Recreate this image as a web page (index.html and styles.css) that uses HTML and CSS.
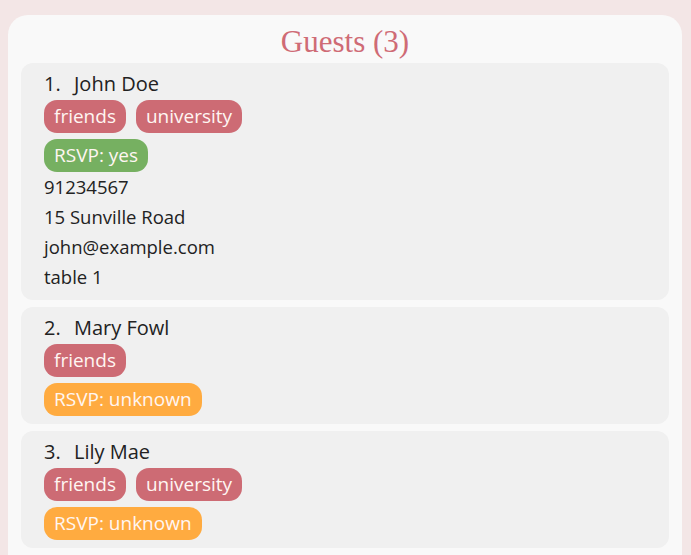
FILE: index.html
```html
<!DOCTYPE html>
<html>
<head>
<meta charset="utf-8">
<link rel="stylesheet" href="styles.css">
</head>
<body>
<div class="panel">
  <h1 class="title">Guests (3)</h1>
  <div class="list">
    <div class="card">
      <div class="name"><span class="num">1.</span>John Doe</div>
      <div class="tags"><span class="tag red">friends</span><span class="tag red">university</span></div>
      <div class="tags rsvp"><span class="tag green">RSVP: yes</span></div>
      <div class="details">
        <div class="line">91234567</div>
        <div class="line">15 Sunville Road</div>
        <div class="line">john@example.com</div>
        <div class="line">table 1</div>
      </div>
    </div>
    <div class="card">
      <div class="name"><span class="num">2.</span>Mary Fowl</div>
      <div class="tags"><span class="tag red">friends</span></div>
      <div class="tags rsvp"><span class="tag orange">RSVP: unknown</span></div>
    </div>
    <div class="card">
      <div class="name"><span class="num">3.</span>Lily Mae</div>
      <div class="tags"><span class="tag red">friends</span><span class="tag red">university</span></div>
      <div class="tags rsvp"><span class="tag orange">RSVP: unknown</span></div>
    </div>
  </div>
</div>
</body>
</html>
```
FILE: styles.css
```css
html, body {
  margin: 0;
  padding: 0;
  background: #f3e6e6;
  height: 100%;
  overflow: hidden;
}
body {
  font-family: "Open Sans", "Noto Sans", sans-serif;
  color: #222;
}
.panel {
  margin: 15px 9px 0 8px;
  background: #f9f9f9;
  border-radius: 20px 20px 0 0;
  padding: 0 13px 20px;
  height: 560px;
  box-sizing: border-box;
}
.title {
  margin: 0;
  font-family: "Liberation Serif", serif;
  font-weight: normal;
  font-size: 31px;
  line-height: 40px;
  padding-top: 7px;
  height: 41px;
  text-align: center;
  color: #cf6b75;
}
.list {
  display: flex;
  flex-direction: column;
  gap: 7px;
}
.card {
  background: #f0f0f0;
  border-radius: 12px;
  padding: 8px 23px 8px;
}
.name {
  font-size: 20px;
  line-height: 26px;
  display: flex;
}
.num {
  width: 30px;
  flex: none;
}
.tags {
  display: flex;
  gap: 10px;
  margin-top: 3px;
}
.tags.rsvp {
  margin-top: 6px;
}
.tag {
  font-size: 19px;
  line-height: 33px;
  height: 33px;
  padding: 0 10px;
  border-radius: 13px;
  color: #fff6f2;
}
.red { background: #cd6b74; }
.green { background: #76b061; }
.orange { background: #ffab40; }
.details {
  font-size: 18.5px;
  line-height: 30px;
}
```
